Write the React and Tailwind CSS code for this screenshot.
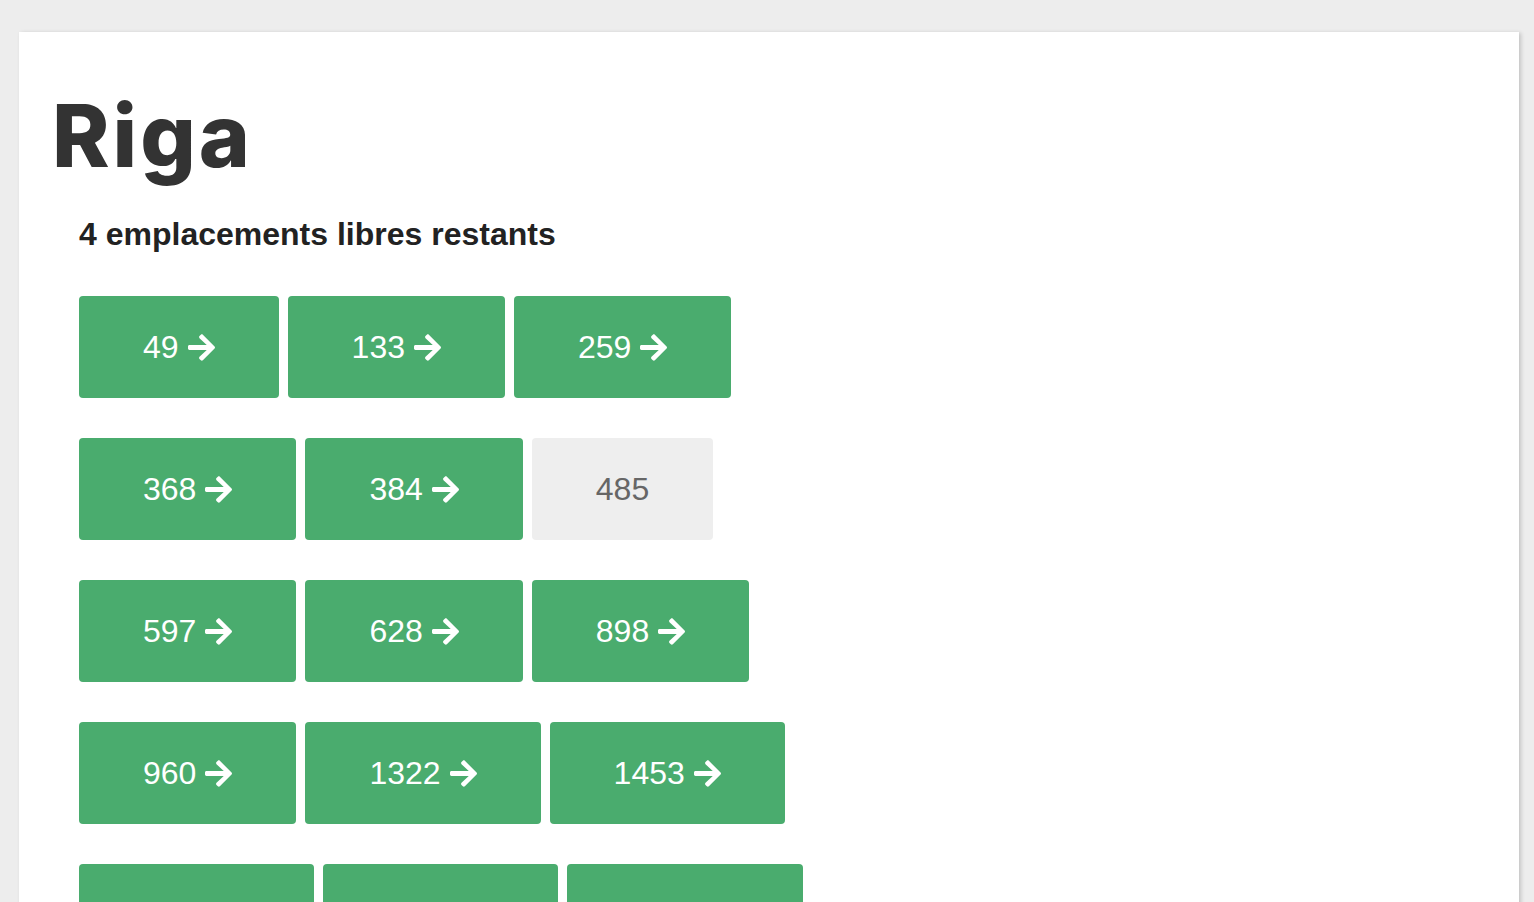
import React from "react";

function Arrow() {
  return (
    <svg width="27" height="31" viewBox="0 0 448 512" className="ml-[9px] shrink-0" fill="currentColor">
      <path d="M190.5 66.9l22.2-22.2c9.4-9.4 24.6-9.4 33.9 0L441 239c9.4 9.4 9.4 24.6 0 33.9L246.6 467.3c-9.4 9.4-24.6 9.4-33.9 0l-22.2-22.2c-9.5-9.5-9.3-25 .4-34.3L311.4 296H24c-13.3 0-24-10.7-24-24v-32c0-13.3 10.7-24 24-24h287.4L190.9 101.2c-9.8-9.3-10-24.8-.4-34.3z" />
    </svg>
  );
}

function Slot({ n, taken }) {
  if (taken) {
    return (
      <div className="h-[102px] px-[64px] flex items-center rounded-[4px] bg-[#eeeeee] text-[#666666] text-[32px] leading-none">
        {n}
      </div>
    );
  }
  return (
    <div className="h-[102px] px-[64px] flex items-center rounded-[4px] bg-[#4aac6e] text-white text-[32px] leading-none">
      <span>{n}</span>
      <Arrow />
    </div>
  );
}

const rows = [
  [{ n: 49 }, { n: 133 }, { n: 259 }],
  [{ n: 368 }, { n: 384 }, { n: 485, taken: true }],
  [{ n: 597 }, { n: 628 }, { n: 898 }],
  [{ n: 960 }, { n: 1322 }, { n: 1453 }],
  [{ n: 1598 }, { n: 1614 }, { n: 1780 }],
];

export default function App() {
  return (
    <div className="h-[902px] bg-[#ededed] pt-[32px] pl-[19px] overflow-hidden" style={{ fontFamily: '"Liberation Sans", Arial, sans-serif' }}>
      <div className="w-[1500px] bg-white shadow-[2px_1px_4px_rgba(0,0,0,0.18)] pl-[33px] pt-[60px] pb-[80px]">
        <h1 className="text-[#333333] text-[87px] leading-none font-extrabold tracking-[3px]" style={{ fontFamily: 'Inter, "Noto Sans", sans-serif' }}>
          Riga
        </h1>
        <div className="pl-[27px]">
          <h2 className="mt-[39px] text-[#222222] text-[32px] leading-none font-bold">
            4 emplacements libres restants
          </h2>
          <div className="mt-[46px] flex flex-col gap-[40px]">
            {rows.map((row, i) => (
              <div key={i} className="flex gap-[9px]">
                {row.map((s) => (
                  <Slot key={s.n} n={s.n} taken={s.taken} />
                ))}
              </div>
            ))}
          </div>
        </div>
      </div>
    </div>
  );
}
